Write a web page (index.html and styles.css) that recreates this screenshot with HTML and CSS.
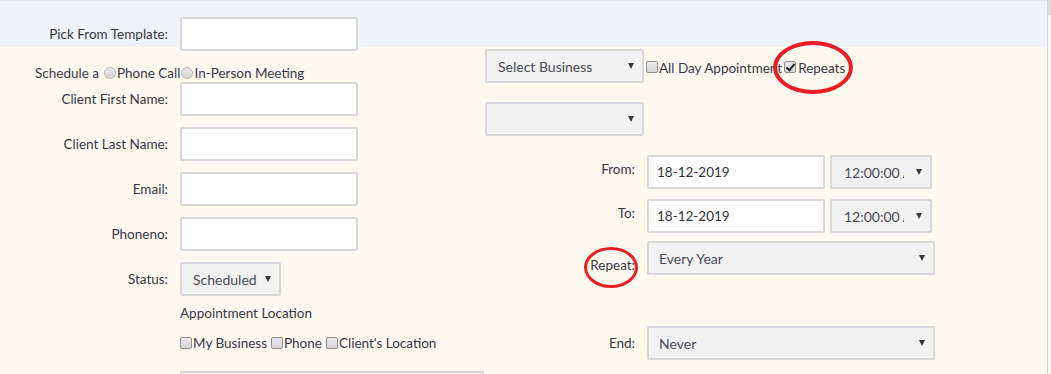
FILE: index.html
```html
<!DOCTYPE html>
<html lang="en">
<head>
    <meta charset="UTF-8">
    <title>New Appointment</title>
    <link rel="stylesheet" href="styles.css">
</head>
<body>
    <div class="page">
        <div class="form">
            <div class="col-left">
                <div class="row">
                    <label class="label" for="template">Pick From Template:</label>
                    <input class="text-input" type="text" id="template">
                </div>
                <div class="schedule-row">
                    <span class="schedule-text">Schedule a</span>
                    <input type="radio" name="kind" class="radio"><span>Phone Call</span>
                    <input type="radio" name="kind" class="radio"><span>In-Person Meeting</span>
                </div>
                <div class="row">
                    <label class="label" for="first">Client First Name:</label>
                    <input class="text-input" type="text" id="first">
                </div>
                <div class="row">
                    <label class="label" for="last">Client Last Name:</label>
                    <input class="text-input" type="text" id="last">
                </div>
                <div class="row">
                    <label class="label" for="email">Email:</label>
                    <input class="text-input" type="text" id="email">
                </div>
                <div class="row">
                    <label class="label" for="phone">Phoneno:</label>
                    <input class="text-input" type="text" id="phone">
                </div>
                <div class="row status-row">
                    <span class="label">Status:</span>
                    <div class="select status-select"><span class="value">Scheduled</span><span class="caret"></span></div>
                </div>
                <div class="sub-title">Appointment Location</div>
                <div class="check-row">
                    <input type="checkbox" class="check"><span>My Business</span>
                    <input type="checkbox" class="check"><span>Phone</span>
                    <input type="checkbox" class="check"><span>Client's Location</span>
                </div>
                <div class="bottom-box"></div>
            </div>

            <div class="col-right">
                <div class="business-row">
                    <div class="select business-select"><span class="value">Select Business</span><span class="caret"></span></div>
                    <input type="checkbox" class="check"><span class="allday">All Day Appointment</span>
                    <span class="repeats">
                        <input type="checkbox" class="check" checked><span>Repeats</span>
                        <span class="mark mark-repeats"></span>
                    </span>
                </div>
                <div class="select business-select second-select"><span class="value"></span><span class="caret"></span></div>

                <div class="row-r from-row">
                    <span class="label-r">From:</span>
                    <input class="text-input date-input" type="text" value="18-12-2019">
                    <div class="select time-select"><span class="value">12:00:00 AM</span><span class="caret"></span></div>
                </div>
                <div class="row-r to-row">
                    <span class="label-r">To:</span>
                    <input class="text-input date-input" type="text" value="18-12-2019">
                    <div class="select time-select"><span class="value">12:00:00 AM</span><span class="caret"></span></div>
                </div>
                <div class="row-r repeat-row">
                    <span class="label-r repeat-label">Repeat:<span class="mark mark-repeat"></span></span>
                    <div class="select wide-select"><span class="value">Every Year</span><span class="caret"></span></div>
                </div>
                <div class="row-r end-row">
                    <span class="label-r">End:</span>
                    <div class="select wide-select"><span class="value">Never</span><span class="caret"></span></div>
                </div>
            </div>
        </div>
        <div class="scrollbar"><div class="thumb"></div></div>
    </div>
</body>
</html>
```

FILE: styles.css
```css
body {
    margin: 0;
    font-family: 'Lato', 'DejaVu Sans', sans-serif;
    font-size: 13.5px;
    color: #383845;
    overflow: hidden;
}

.page {
    display: flex;
    height: 374px;
    background: linear-gradient(#e4e8ec 0 1px, #eff3f7 1px 47px, #fdf9ef 47px);
}

.form {
    flex: 1;
    display: flex;
}

.col-left {
    width: 485px;
    padding-top: 17px;
}

.row {
    display: flex;
    align-items: center;
    height: 34px;
    margin-bottom: 11px;
}

.label {
    width: 168px;
    margin-right: 12px;
    text-align: right;
}

.text-input {
    box-sizing: border-box;
    width: 178px;
    height: 34px;
    border: 2px solid #d8d8d8;
    border-radius: 2px;
    background: #fff;
    padding: 0 8px;
    font-family: inherit;
    font-size: 13.5px;
    color: #333;
    outline: none;
}

.schedule-row {
    display: flex;
    align-items: center;
    height: 18px;
    margin-top: 13px;
    margin-bottom: 0;
    padding-left: 35px;
}

.schedule-text {
    margin-right: 4px;
}

/* old-style grey radio / checkbox */
.radio,
.check {
    appearance: none;
    box-sizing: border-box;
    width: 12px;
    height: 12px;
    margin: 0 1px;
    border: 1px solid #a2a2a2;
    background: linear-gradient(#e9e9e9, #d4d4d4);
    position: relative;
}

.radio {
    border-radius: 50%;
    border-color: #b4b4b4;
}

.check {
    border-radius: 2px;
    border-color: #8e8e8e;
}

.check:checked::after {
    content: "";
    position: absolute;
    left: 3px;
    top: 0;
    width: 3px;
    height: 7px;
    border: solid #2c2c2c;
    border-width: 0 2px 2px 0;
    transform: rotate(40deg);
}

.select {
    box-sizing: border-box;
    display: flex;
    align-items: center;
    height: 34px;
    border: 2px solid #d8d8d8;
    border-radius: 2px;
    background: #f2f2f2;
    color: #4a4a58;
    font-size: 14px;
    padding: 0 8px 0 10px;
}

.select .value {
    flex: 1;
    overflow: hidden;
    white-space: nowrap;
}

.caret {
    width: 0;
    height: 0;
    border-left: 3.5px solid transparent;
    border-right: 3.5px solid transparent;
    border-top: 6px solid #3a3a3a;
    margin-left: 6px;
}

.status-row {
    margin-bottom: 8px;
}

.status-select {
    width: 101px;
    padding-left: 11px;
}

.sub-title {
    margin-left: 180px;
    line-height: 18px;
}

.check-row {
    display: flex;
    align-items: center;
    margin: 12px 0 0 179px;
    line-height: 18px;
}

.check-row span {
    margin-right: 3px;
}

.bottom-box {
    margin: 19px 0 0 180px;
    width: 304px;
    height: 34px;
    box-sizing: border-box;
    border: 2px solid #d8d8d8;
    background: #f2f2f2;
}

.col-right {
    padding-top: 49px;
}

.business-row {
    display: flex;
    align-items: center;
}

.business-select {
    width: 159px;
    padding-left: 11px;
}

.business-row .check {
    margin: 2px 1px 0 2px;
}

.allday {
    margin-top: 4px;
}

.repeats {
    position: relative;
    display: flex;
    align-items: center;
    margin-left: 2px;
    margin-top: 4px;
}

.repeats .check {
    margin: 0 2px 2px 0;
}

.mark {
    position: absolute;
    box-sizing: border-box;
    border: 4px solid #ea1c24;
    border-radius: 50%;
}

.mark-repeats {
    left: -11px;
    top: -19px;
    width: 80px;
    height: 53px;
}

.second-select {
    margin-top: 19px;
}

.row-r {
    display: flex;
    align-items: center;
}

.label-r {
    width: 150px;
    margin-right: 12px;
    text-align: right;
}

.from-row {
    margin-top: 19px;
}

.from-row .label-r,
.to-row .label-r {
    margin-top: -6px;
}

.to-row {
    margin-top: 10px;
}

.date-input {
    padding-left: 8px;
}

.time-select {
    width: 102px;
    margin-left: 5px;
    padding: 0 8px 0 12px;
}

.time-select .value {
    margin-right: 6px;
}

.repeat-row {
    align-items: flex-start;
    margin-top: 8px;
}

.repeat-label {
    position: relative;
    padding-top: 16px;
}

.mark-repeat {
    right: -3px;
    top: 6px;
    width: 54px;
    height: 41px;
    border-width: 3px;
}

.wide-select {
    width: 288px;
    padding-left: 10px;
}

.end-row {
    margin-top: 51px;
}

.scrollbar {
    width: 3px;
    border-left: 1px solid #d6d6d6;
    background: #f7f7f7;
}

.thumb {
    height: 15px;
    background: #dcdcdc;
}
```
